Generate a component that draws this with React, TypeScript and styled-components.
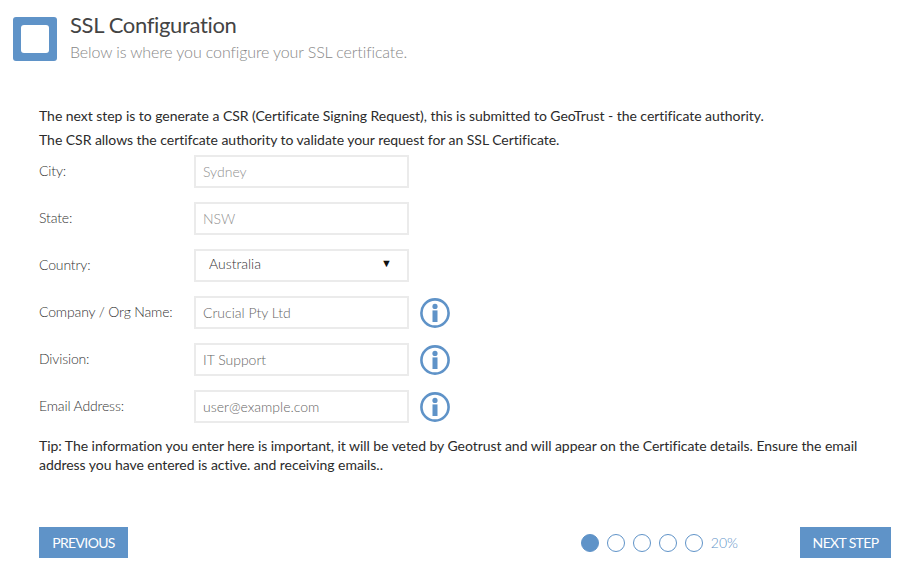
import React from 'react';
import styled, { createGlobalStyle } from 'styled-components';

const GlobalStyle = createGlobalStyle`
  html, body {
    margin: 0;
    padding: 0;
    background: #fff;
    font-family: Lato, "Liberation Sans", sans-serif;
  }
`;

const fields = [
  { label: 'City:', hint: 'Sydney' },
  { label: 'State:', hint: 'NSW' },
  { label: 'Country:', value: 'Australia', select: true },
  { label: 'Company / Org Name:', value: 'Crucial Pty Ltd', info: true },
  { label: 'Division:', value: 'IT Support', info: true },
  { label: 'Email Address:', value: 'user@example.com', info: true },
];

const InfoIcon = () => (
  <svg width="30" height="30" viewBox="0 0 30 30">
    <circle cx="15" cy="15" r="13.6" fill="none" stroke="#5f93c8" strokeWidth="2.6" />
    <circle cx="15" cy="8.4" r="2.6" fill="#5f93c8" />
    <rect x="12.5" y="12.4" width="5" height="11.6" fill="#5f93c8" />
  </svg>
);

const App: React.FC = () => {
  return (
    <Page>
      <GlobalStyle />
      <Header>
        <BadgeIcon>
          <span />
        </BadgeIcon>
        <div>
          <Title>SSL Configuration</Title>
          <Subtitle>Below is where you configure your SSL certificate.</Subtitle>
        </div>
      </Header>
      <Content>
        <Intro>
          The next step is to generate a CSR (Certificate Signing Request), this is submitted to GeoTrust - the certificate authority.
          <br />
          The CSR allows the certifcate authority to validate your request for an SSL Certificate.
        </Intro>
        <Form>
          {fields.map((f) => (
            <Row key={f.label}>
              <Label>{f.label}</Label>
              {f.select ? (
                <SelectBox>
                  <span>{f.value}</span>
                  <Arrow>▼</Arrow>
                </SelectBox>
              ) : (
                <Input readOnly value={f.value} placeholder={f.hint} />
              )}
              {f.info && <InfoIcon />}
            </Row>
          ))}
        </Form>
        <Tip>
          Tip: The information you enter here is important, it will be veted by Geotrust and will appear on the Certificate details. Ensure the email address you have entered is active. and receiving emails..
        </Tip>
      </Content>
      <Footer>
        <Button $width={89}>PREVIOUS</Button>
        <FooterRight>
          <Dots>
            {[0, 1, 2, 3, 4].map((i) => (
              <Dot key={i} $active={i === 0} />
            ))}
          </Dots>
          <Percent>20%</Percent>
          <Button $width={91}>NEXT STEP</Button>
        </FooterRight>
      </Footer>
    </Page>
  );
};

export default App;

const Page = styled.div`
  width: 908px;
  height: 570px;
  box-sizing: border-box;
  overflow: hidden;
  padding-top: 17px;
`;

const Header = styled.div`
  display: flex;
  align-items: flex-start;
  gap: 13px;
  padding-left: 13px;
`;

const BadgeIcon = styled.div`
  width: 44px;
  height: 44px;
  background: #5f93c8;
  border-radius: 3px;
  display: flex;
  align-items: center;
  justify-content: center;
  > span {
    width: 28px;
    height: 28px;
    background: #fff;
    border-radius: 3px;
  }
`;

const Title = styled.h1`
  margin: -6px 0 0;
  font-size: 22px;
  font-weight: 400;
  line-height: 28px;
  letter-spacing: -0.35px;
  color: #444;
`;

const Subtitle = styled.p`
  margin: 1px 0 0;
  font-size: 16px;
  font-weight: 300;
  line-height: 24px;
  letter-spacing: -0.12px;
  color: #888;
`;

const Content = styled.div`
  padding: 0 39px;
  margin-top: 40px;
`;

const Intro = styled.p`
  margin: 0;
  font-size: 14px;
  line-height: 24px;
  letter-spacing: -0.04px;
  color: #2b2b2b;
`;

const Form = styled.div`
  display: flex;
  flex-direction: column;
  gap: 14px;
  margin-top: 3px;
`;

const Row = styled.div`
  display: flex;
  align-items: center;
  height: 33px;
`;

const Label = styled.div`
  width: 155px;
  font-size: 14px;
  font-weight: 300;
  letter-spacing: -0.15px;
  color: #333;
  margin-top: -2px;
`;

const Input = styled.input`
  box-sizing: border-box;
  width: 215px;
  height: 33px;
  border: 2px solid #ebebeb;
  border-radius: 0;
  padding: 0 7px;
  margin: 0 11px 0 0;
  outline: none;
  font-family: inherit;
  font-size: 14px;
  font-weight: 300;
  color: #666;
  &::placeholder {
    color: #909090;
    opacity: 1;
  }
`;

const SelectBox = styled.div`
  box-sizing: border-box;
  width: 215px;
  height: 33px;
  border: 2px solid #ebebeb;
  padding: 0 15px 4px 13px;
  display: flex;
  align-items: center;
  justify-content: space-between;
  font-size: 14px;
  font-weight: 300;
  color: #333;
`;

const Arrow = styled.span`
  font-family: "DejaVu Sans", sans-serif;
  font-size: 11px;
  color: #111;
`;

const Tip = styled.p`
  margin: 13px 0 0;
  font-size: 14px;
  line-height: 19px;
  letter-spacing: -0.05px;
  color: #2b2b2b;
`;

const Footer = styled.div`
  display: flex;
  justify-content: space-between;
  align-items: center;
  padding: 0 17px 0 39px;
  margin-top: 53px;
`;

const FooterRight = styled.div`
  display: flex;
  align-items: center;
`;

const Button = styled.button<{ $width: number }>`
  width: ${(p) => p.$width}px;
  height: 31px;
  border: 0;
  padding: 0;
  background: #5f93c8;
  color: #fff;
  font-family: inherit;
  font-size: 14px;
  font-weight: 400;
  letter-spacing: -0.65px;
`;

const Dots = styled.div`
  display: flex;
  gap: 8px;
`;

const Dot = styled.span<{ $active?: boolean }>`
  box-sizing: border-box;
  width: 18px;
  height: 18px;
  border-radius: 50%;
  border: 1px solid #5f93c8;
  background: ${(p) => (p.$active ? '#5f93c8' : '#fff')};
`;

const Percent = styled.span`
  margin: 0 62px 0 8px;
  font-size: 14px;
  font-weight: 300;
  color: #5f93c8;
`;
